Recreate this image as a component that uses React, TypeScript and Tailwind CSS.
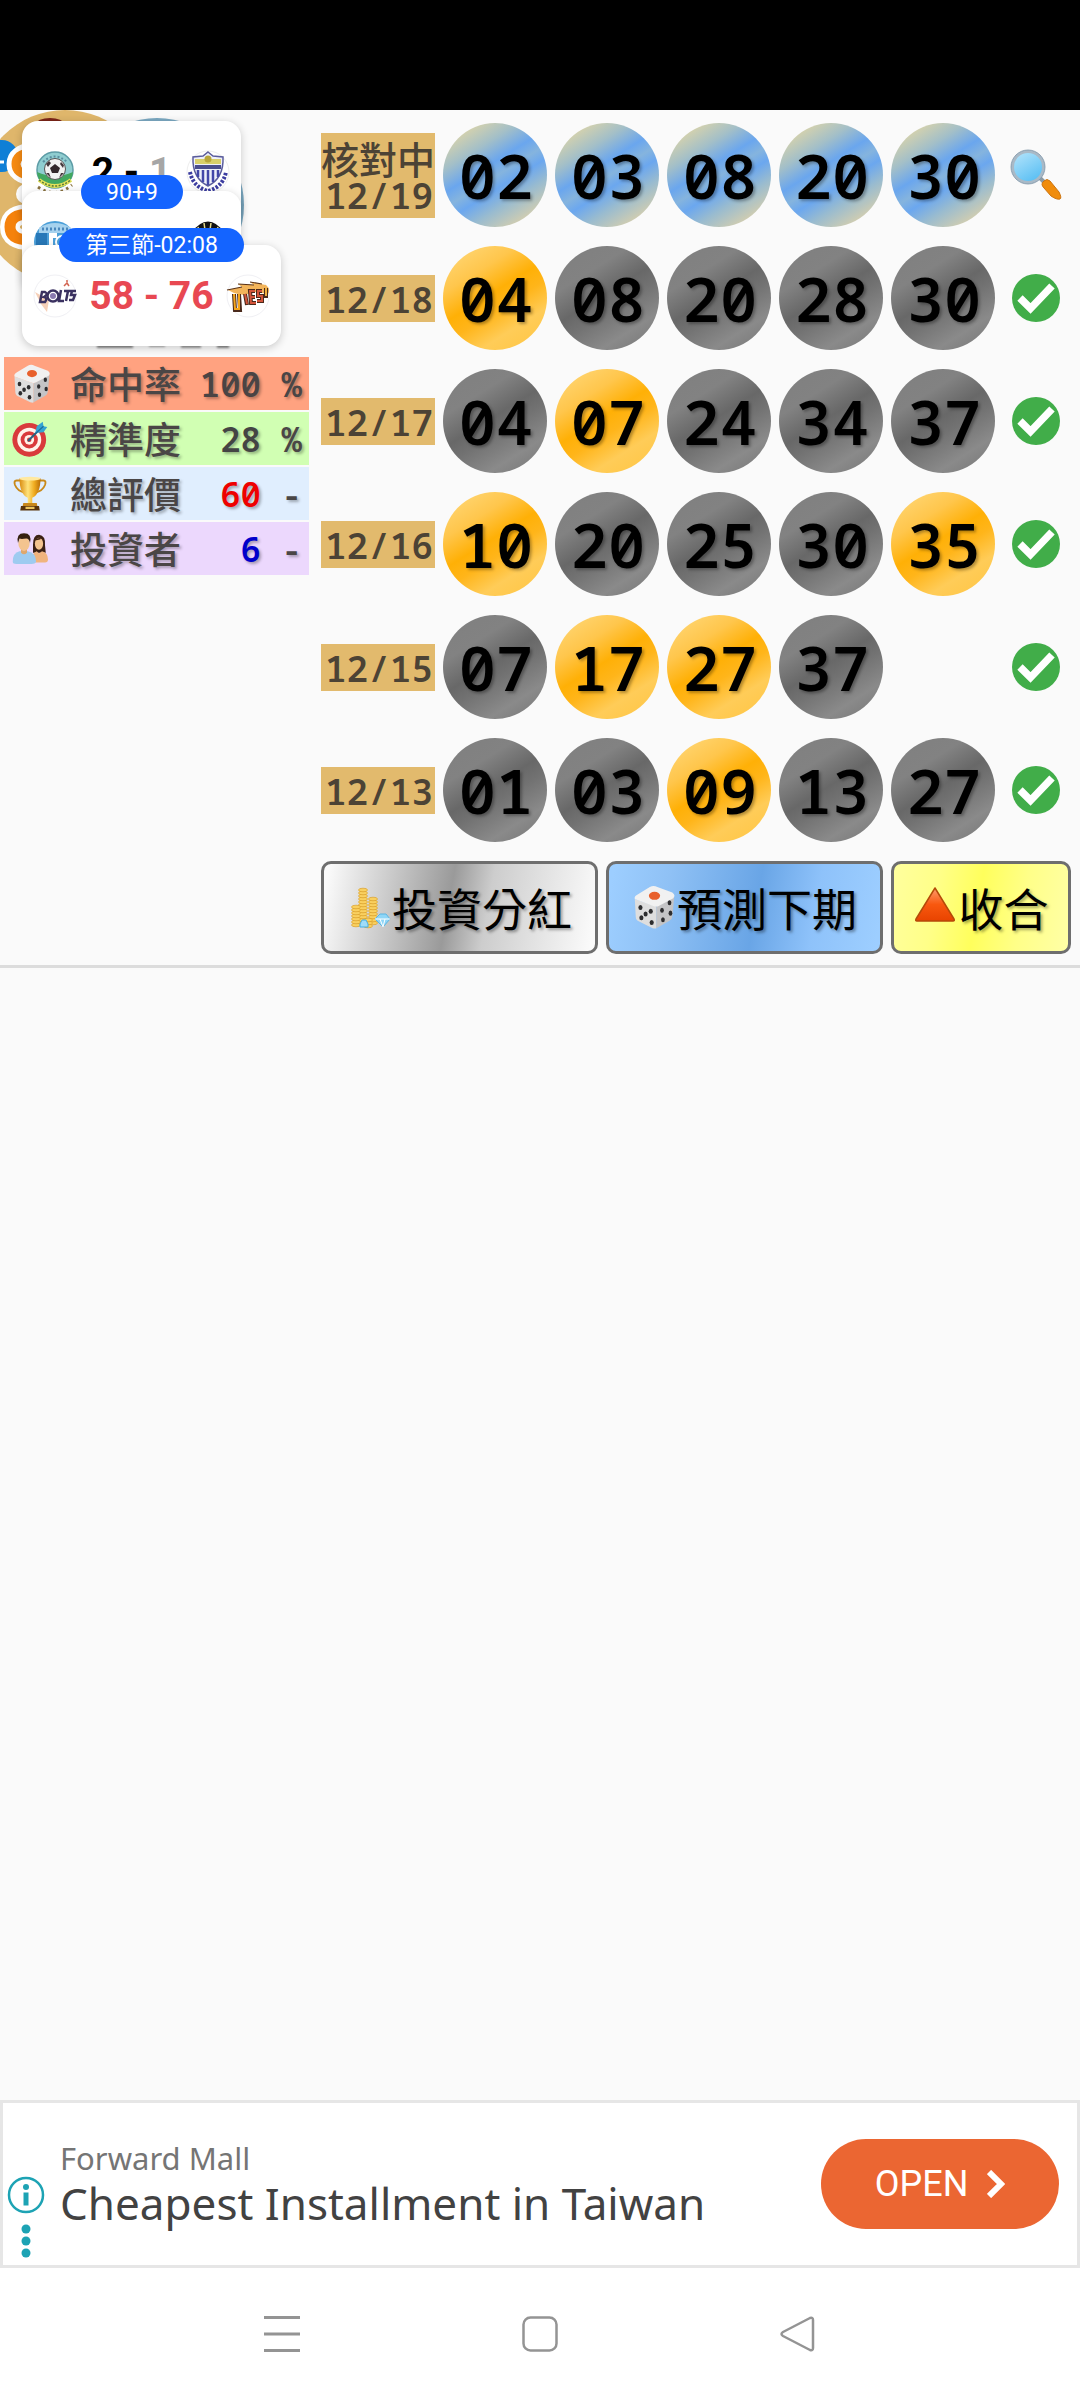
import React from 'react';
import type { ReactNode } from 'react';

const MONO = "font-['Noto_Sans_Mono','DejaVu_Sans_Mono','Noto_Sans_CJK_TC',monospace]";
const CJK = "font-['Noto_Sans_CJK_TC',sans-serif]";
const ROBOTO = "font-['Roboto','Noto_Sans_CJK_TC',sans-serif]";

function Dice({ className }: { className: string }) {
  return (
    <svg viewBox="0 0 48 48" className={className} aria-hidden="true">
      <path d="M3 15 L26 23 L26 46 Q25 47 22 46 L6 38 Q4 37 4 34 Z" fill="#dedede" />
      <path d="M26 23 L45 13 L43 33 Q43 36 40 38 L26 46 Z" fill="#c4c4c6" />
      <path d="M3 15 Q2 12 6 10 L19 2 Q23 0 27 2 L43 8 Q47 11 44 14 L29 22 Q26 24 22 22 Z" fill="#f1f1f1" />
      <ellipse cx="24" cy="11.500" rx="6" ry="4.300" fill="#e8602c" />
      <g fill="#2d2d2f">
        <ellipse cx="9" cy="24" rx="2.200" ry="2.700" />
        <ellipse cx="20" cy="28" rx="2.200" ry="2.700" />
        <ellipse cx="14.500" cy="31" rx="2.200" ry="2.700" />
        <ellipse cx="10" cy="35" rx="2.200" ry="2.700" />
        <ellipse cx="21" cy="40" rx="2.200" ry="2.700" />
        <ellipse cx="32" cy="27" rx="2" ry="2.700" />
        <ellipse cx="40" cy="19" rx="2" ry="2.700" />
        <ellipse cx="33" cy="37" rx="2" ry="2.700" />
        <ellipse cx="41" cy="30" rx="2" ry="2.700" />
      </g>
    </svg>
  );
}

function Target() {
  return (
    <svg viewBox="0 0 48 48" className="h-9 w-9" aria-hidden="true">
      <circle cx="23" cy="25" r="22.500" fill="#d93a3c" />
      <circle cx="23" cy="25" r="16" fill="#fff3ea" />
      <circle cx="23" cy="25" r="11.500" fill="#d93a3c" />
      <circle cx="23" cy="25" r="6.500" fill="#fff3ea" />
      <circle cx="23" cy="25" r="3" fill="#d93a3c" />
      <path d="M22 26 L36 12" stroke="#27617f" strokeWidth="2.500" strokeLinecap="round" />
      <path d="M31 16 L33 7 L41 1 L42 7 L47 8 L42 15 Z" fill="#35a3d3" />
      <path d="M32 16 L42 7" stroke="#1b6d99" strokeWidth="1.500" />
    </svg>
  );
}

function Trophy() {
  return (
    <svg viewBox="0 0 48 48" className="h-9 w-9" aria-hidden="true">
      <defs>
        <linearGradient id="cup" x1="0" x2="1">
          <stop offset="0" stopColor="#d98b10" />
          <stop offset="0.400" stopColor="#ffe27a" />
          <stop offset="0.700" stopColor="#f0ac20" />
          <stop offset="1" stopColor="#b96d06" />
        </linearGradient>
      </defs>
      <path d="M12 6 H6 Q2 6 4 12 Q7 20 17 22" fill="none" stroke="#c98a1a" strokeWidth="2.500" />
      <path d="M36 6 H42 Q46 6 44 12 Q41 20 31 22" fill="none" stroke="#c98a1a" strokeWidth="2.500" />
      <path d="M10 3 H38 Q38 24 27 29 V37 H21 V29 Q10 24 10 3 Z" fill="url(#cup)" />
      <ellipse cx="24" cy="3.500" rx="14" ry="2.500" fill="#ffe9a0" />
      <path d="M15 36 H33 L34 41 H14 Z" fill="#c8871a" />
      <path d="M12 40 H36 L37 46 H11 Z" fill="#593309" />
      <rect x="18" y="41" width="12" height="3" fill="#edc45c" />
    </svg>
  );
}

function Couple() {
  return (
    <svg viewBox="0 0 48 48" className="h-9 w-9" aria-hidden="true">
      <path d="M28 18 Q28 5 36 5 Q45 6 44 19 L45 29 H28 Z" fill="#3b2114" />
      <ellipse cx="36" cy="17" rx="5.500" ry="8" fill="#f3c48f" />
      <path d="M30 12 Q37 13 41 9 L43 14 Q38 6 30 12" fill="#3b2114" />
      <path d="M26 42 Q26 29 33 27 L36 30 L40 27 Q48 29 48 38 Q48 42 44 42 Z" fill="#f0b47e" />
      <path d="M1 41 Q1 29 10 27 H21 Q32 29 32 41 Q31 44 26 44 H6 Q1 44 1 41" fill="#9ecbf0" />
      <path d="M12 22 H20 V29 Q16 33 12 29 Z" fill="#dfa76d" />
      <ellipse cx="16" cy="17" rx="7.500" ry="9.500" fill="#f3c48f" />
      <path d="M8 16 Q5 3 16 3 Q27 3 24 16 Q23 10 19 10 Q12 11 10 10 Z" fill="#35200f" />
    </svg>
  );
}

function Magnifier() {
  return (
    <svg viewBox="0 0 52 52" className="h-[52px] w-[52px]" aria-hidden="true">
      <defs>
        <linearGradient id="lens" x1="0" y1="0" x2="0.600" y2="1">
          <stop offset="0" stopColor="#b9e6fb" />
          <stop offset="1" stopColor="#5cc0f4" />
        </linearGradient>
      </defs>
      <path d="M30 29 L36 35" stroke="#8c9aa3" strokeWidth="4" />
      <path d="M34 32 Q37 29 40 32 L49 43 Q52 49 50 50 Q47 51 41 47 L34 39 Q30 35 34 32 Z" fill="#f08c0c" stroke="#cc7410" />
      <circle cx="18" cy="18" r="15.500" fill="url(#lens)" stroke="#a9b9c6" strokeWidth="3" />
      <circle cx="18" cy="18" r="17" fill="none" stroke="#7f95a8" strokeWidth="0.800" />
    </svg>
  );
}

function Check() {
  return (
    <svg viewBox="0 0 48 48" className="h-12 w-12" role="img" aria-label="已核對">
      <circle cx="24" cy="24" r="24" fill="#41ad49" />
      <path d="M8 24 L18.500 34.500 L40 12" fill="none" stroke="#fff" strokeWidth="7.500" />
    </svg>
  );
}

function Coins() {
  return (
    <svg viewBox="0 0 45 45" className="h-[45px] w-[45px]" aria-hidden="true">
      <g stroke="#dba02a" strokeWidth="0.700" fill="#f9d060">
        {[38, 35, 32, 29, 26, 23, 20, 17, 14, 11, 8, 5].map((y) => (
          <ellipse key={'a' + y} cx="16" cy={y} rx="4.500" ry="1.800" />
        ))}
        {[38, 35, 32, 29, 26, 23, 20, 17, 14].map((y) => (
          <ellipse key={'b' + y} cx="26" cy={y} rx="4.500" ry="1.800" />
        ))}
        {[40, 37, 34, 31, 28, 25, 22].map((y) => (
          <ellipse key={'c' + y} cx="9" cy={y} rx="4.500" ry="1.800" />
        ))}
        {[41, 38, 35].map((y) => (
          <ellipse key={'d' + y} cx="21" cy={y} rx="4.500" ry="1.800" />
        ))}
      </g>
      <path d="M28 34 L33 29 H39 L43 34 L36 42 Z" fill="#8fd6f7" stroke="#5bb6e4" />
      <path d="M28 34 H43 M33 34 L36 42 L38 34" fill="none" stroke="#fff" />
      <path d="M13 39 L15 35 H19 L21 39 V42 H13 Z" fill="#9fdcf8" stroke="#45aee2" />
    </svg>
  );
}

function RedTriangle() {
  return (
    <svg viewBox="0 0 45 45" className="h-[45px] w-[45px]" aria-hidden="true">
      <defs>
        <linearGradient id="tri" x1="0" y1="0" x2="0" y2="1">
          <stop offset="0" stopColor="#ff9c6e" />
          <stop offset="0.500" stopColor="#f8580f" />
          <stop offset="1" stopColor="#e84300" />
        </linearGradient>
      </defs>
      <path d="M22 3 L41 34 Q42 36 40 36 H4 Q2 36 3 34 Z" fill="url(#tri)" stroke="#b54a08" strokeWidth="1.500" strokeLinejoin="round" />
    </svg>
  );
}

function GreenBadge() {
  return (
    <svg viewBox="0 0 44 44" className="h-11 w-11" aria-hidden="true">
      <circle cx="22" cy="20" r="18" fill="#8fcdd0" stroke="#5d9ca6" strokeWidth="1.500" />
      <path d="M4 22 Q22 30 40 22 Q38 38 22 38 Q6 38 4 22 Z" fill="#42a860" />
      <path d="M6 30 Q22 42 38 30" fill="none" stroke="#e4e25a" strokeWidth="4" />
      <path d="M6 30 Q22 42 38 30" fill="none" stroke="#5b7c3a" strokeWidth="1.500" strokeDasharray="2 1.500" />
      <path d="M10 12 Q22 1 34 12" fill="none" stroke="#5a8fa0" strokeWidth="2" strokeDasharray="2 2" />
      <circle cx="22" cy="19" r="10.500" fill="#f2f2f2" stroke="#555" />
      <path d="M22 14 L27 18 L25 23 H19 L17 18 Z" fill="#33282c" />
      <path d="M13 14 L16 11 L18 13 L15 17 Z M28 12 L31 15 L30 18 L27 14 Z M13 23 L16 23 L18 28 Z M31 23 L28 23 L26 28 Z" fill="#44383c" />
      <path d="M5 37 Q22 49 39 35" fill="none" stroke="#8a7340" strokeWidth="3" strokeDasharray="2.500 3.500" />
    </svg>
  );
}

function ShieldBadge() {
  return (
    <svg viewBox="0 0 44 44" className="h-11 w-11" aria-hidden="true">
      <circle cx="22" cy="22" r="21" fill="#fff" stroke="#eee" />
      <path d="M22 2 L27 6 L37 7 Q38 28 22 36 Q6 28 7 7 L17 6 Z" fill="#eef0fa" stroke="#5a5c9c" strokeWidth="1.500" />
      <path d="M9 9 H35 V14 H9 Z" fill="#d8cf6a" />
      <circle cx="22" cy="9" r="3.500" fill="#b8a63a" />
      <path d="M9 15 H35 V19 H9 Z" fill="#4a4d8d" />
      <path d="M12 20 V27 M17 20 V32 M22 20 V35 M27 20 V32 M32 20 V27" stroke="#4347a8" strokeWidth="2.500" />
      <path d="M4 22 Q7 37 22 41 Q37 37 40 22" fill="none" stroke="#3c3da0" strokeWidth="4" strokeDasharray="2.500 1.500" />
    </svg>
  );
}

function BlueBadge() {
  return (
    <svg viewBox="0 0 44 44" className="h-11 w-11" aria-hidden="true">
      <circle cx="22" cy="22" r="21" fill="#4b9fd8" />
      <path d="M6 8 Q22 -2 38 8 V13 H6 Z" fill="#a6d2ee" />
      <path d="M9 9 H35" stroke="#4b88bd" strokeWidth="3" strokeDasharray="2 2" />
      <path d="M3 13 H14 V26 H3 Z" fill="#2878b8" />
      <path d="M16 13 H24 V18 H20 V25 H16 Z" fill="#fff" />
      <circle cx="29" cy="22" r="6" fill="none" stroke="#fff" strokeWidth="2" />
    </svg>
  );
}

function BlackBadge() {
  return (
    <svg viewBox="0 0 44 44" className="h-11 w-11" aria-hidden="true">
      <path d="M5 13 Q22 -10 39 13 Z" fill="#111" />
      <path d="M12 7 L14 13 M18 3 L19 10 M25 3 L24 10 M32 7 L30 13" stroke="#e4d98c" strokeWidth="1.500" />
    </svg>
  );
}

function BoltsBadge() {
  return (
    <svg viewBox="0 0 44 44" className="h-11 w-11" aria-hidden="true">
      <circle cx="22" cy="22" r="21" fill="#fff" stroke="#f0f0f4" />
      <path d="M2 18 L16 26 L14 38 L8 30 Z" fill="#f6d0b8" />
      <g fill="none" stroke="#3a3160" strokeWidth="2.500">
        <path d="M9 18 L7 28 H12 Q15 24 11 23 Q16 20 12 18 Z" />
        <circle cx="20" cy="22" r="5.500" />
        <path d="M28 16 L26 27 H31 M31 17 H38 M35 17 L33 27 M43 17 H39 L38 21 H42 L40 26 H36" />
      </g>
      <circle cx="20" cy="22" r="3" fill="#8b7bb0" />
      <path d="M31 12 L34 9 L36 12 M33 7 L35 7" fill="none" stroke="#d26552" strokeWidth="1.500" />
    </svg>
  );
}

function FlameBadge() {
  return (
    <svg viewBox="0 0 44 44" className="h-11 w-11" aria-hidden="true">
      <circle cx="22" cy="22" r="21" fill="#fff" stroke="#f0f0f4" />
      <path d="M2 16 L16 13 L12 10 L28 11 L24 8 L40 11 Q45 15 42 20 L30 18 L18 21 L12 20 L8 19 Z" fill="#f2b45a" />
      <path d="M1 16 L16 13 M12 10 L28 11 M24 8 L36 10" stroke="#5a3216" strokeWidth="1.200" />
      <g fill="none" stroke="#4a2a1c" strokeWidth="4">
        <path d="M8 20 L9 36 H14 L13 20" />
        <path d="M19 20 L21 31 M29 17 H24 L25 29 H30 M24 23 H29 M36 17 H32 V22 H36 V27 H31 M40 14 L40 24" />
      </g>
      <g fill="none" strokeWidth="2">
        <path d="M8 20 L9 35 H13 L13 20" stroke="#f5a51c" />
        <path d="M19 20 L21 30 M29 17 H24 L25 29 H30 M24 23 H29 M36 17 H32 V22 H36 V27 H31" stroke="#d2543a" />
        <path d="M40 14 L40 22" stroke="#f0b040" />
      </g>
    </svg>
  );
}

function Medallions() {
  return (
    <svg viewBox="0 0 250 200" className="h-[200px] w-[250px]" aria-hidden="true">
      <circle cx="157" cy="95" r="87" fill="#7ba9c2" />
      <circle cx="65" cy="87" r="87" fill="#dfb66b" />
      <ellipse cx="50" cy="14" rx="14" ry="6" fill="#7b2418" />
      <circle cx="2" cy="46" r="16" fill="#0f7fd6" />
      <path d="M0 52 H4" stroke="#fff" strokeWidth="3" />
      <path d="M32 42 Q16 44 16 54 Q16 64 32 66" fill="none" stroke="#fff" strokeWidth="19" />
      <path d="M32 42 Q16 44 16 54 Q16 64 32 66" fill="none" stroke="#f58a12" strokeWidth="9" />
      <circle cx="26" cy="84" r="10" fill="#fff" />
      <path d="M30 104 Q10 104 10 117 Q10 130 30 130" fill="none" stroke="#fff" strokeWidth="20" />
      <path d="M30 104 Q10 104 10 117 Q10 130 30 130" fill="none" stroke="#f5820c" strokeWidth="11" />
    </svg>
  );
}

function ScoreCard({ left, right, children }: { left: ReactNode; right: ReactNode; children: ReactNode }) {
  return (
    <div className="flex h-[101px] items-center rounded-2xl bg-white px-[11px] shadow-[0_2px_8px_rgba(0,0,0,0.2)]">
      {left}
      <div className={`flex-1 text-center text-[39px] font-bold leading-[44px] ${ROBOTO}`}>{children}</div>
      {right}
    </div>
  );
}

function Pill({ children }: { children: ReactNode }) {
  return (
    <div className={`flex h-[34px] items-center justify-center rounded-full bg-[#1464ff] text-[23px] leading-none text-white ${ROBOTO}`}>
      {children}
    </div>
  );
}

const stats = [
  { icon: <Dice className="h-10 w-10" />, label: '命中率', value: '100', unit: '%', row: 'bg-[#ffa280]', tone: 'text-[#4a4444]' },
  { icon: <Target />, label: '精準度', value: '28', unit: '%', row: 'bg-[#d1ffb3]', tone: 'text-[#444444]' },
  { icon: <Trophy />, label: '總評價', value: '60', unit: '-', row: 'bg-[#e0eefe]', tone: 'text-[#ee0000]' },
  { icon: <Couple />, label: '投資者', value: '6', unit: '-', row: 'bg-[#ecd8fd]', tone: 'text-[#0000cc]' },
];

type Draw = { date: string; balls: string[]; hits: string[]; pending?: boolean };

const draws: Draw[] = [
  { date: '12/19', balls: ['02', '03', '08', '20', '30'], hits: [], pending: true },
  { date: '12/18', balls: ['04', '08', '20', '28', '30'], hits: ['04'] },
  { date: '12/17', balls: ['04', '07', '24', '34', '37'], hits: ['07'] },
  { date: '12/16', balls: ['10', '20', '25', '30', '35'], hits: ['10', '35'] },
  { date: '12/15', balls: ['07', '17', '27', '37', ''], hits: ['17', '27'] },
  { date: '12/13', balls: ['01', '03', '09', '13', '27'], hits: ['09'] },
];

const BLUE = 'bg-[linear-gradient(148deg,#d0d0b0_14%,#a3bfc8_28%,#6aa6ee_42%,#85b4de_51%,#6ba7ef_59%,#98bbd0_71%,#cdccb3_86%)]';
const GOLD = 'bg-[linear-gradient(148deg,#ffd571_8%,#ffc64c_28%,#ffb006_46%,#ffb51a_58%,#ffcc58_75%,#ffc748_92%)]';
const GREY = 'bg-[linear-gradient(148deg,#808080_8%,#828282_28%,#686868_47%,#727272_58%,#8a8a8a_78%,#7c7c7c_92%)]';

function Ball({ value, draw }: { value: string; draw: Draw }) {
  if (!value) return <span />;
  const fill = draw.pending ? BLUE : draw.hits.includes(value) ? GOLD : GREY;
  return (
    <span className={`flex aspect-square items-center justify-center rounded-full pl-[2px] text-[62px] font-semibold leading-none text-black [text-shadow:2px_2px_3px_rgba(0,0,0,0.3)] ${fill} ${MONO}`}>
      {value}
    </span>
  );
}

function DrawRow({ draw }: { draw: Draw }) {
  return (
    <li className="grid grid-cols-[114px_repeat(5,minmax(0,1fr))_68px] items-center gap-2">
      <span className={`flex flex-col items-center bg-[#e2ba6d] pb-1 pl-[2px] pt-[6px] text-[36px] font-semibold leading-[37px] text-[#4c4335] ${MONO}`}>
        {draw.pending && <span className={`-ml-[2px] text-[38px] font-medium leading-[38px] ${CJK}`}>核對中</span>}
        {draw.date}
      </span>
      {draw.balls.map((value, i) => (
        <Ball key={i} value={value} draw={draw} />
      ))}
      <span className="flex justify-center pr-[2px]">{draw.pending ? <Magnifier /> : <Check />}</span>
    </li>
  );
}

function ActionButton({ fill, icon, label }: { fill: string; icon: ReactNode; label: string }) {
  return (
    <button
      type="button"
      className={`flex h-[93px] items-center justify-center rounded-[10px] border-[3px] border-[#6e6e6e] text-[45px] leading-none text-black [text-shadow:2px_2px_3px_rgba(0,0,0,0.35)] ${fill} ${CJK}`}
    >
      {icon}
      <span>{label}</span>
    </button>
  );
}

export default function App() {
  return (
    <div className="flex min-h-screen flex-col bg-[#fafafa]">
      <header className="h-[110px] shrink-0 bg-black" />

      <main className="flex-1">
        <section className="relative flex border-b-[3px] border-[#dcdcdc]">
          <div className="w-[310px] shrink-0 overflow-hidden">
            <div className="relative h-[245px]">
              <div className="absolute left-0 top-0"><Medallions /></div>
              <div className="absolute left-[97px] top-[232px] flex gap-4 blur-[1px]">
                <span className="h-[6px] w-9 bg-[#888]" />
                <span className="h-[5px] w-4 bg-[#aaa]" />
                <span className="h-[6px] w-5 bg-[#999]" />
                <span className="h-[6px] w-3 bg-[#888]" />
              </div>
              <div className="absolute left-[22px] top-[11px] w-[219px]">
                <ScoreCard left={<GreenBadge />} right={<ShieldBadge />}>
                  2 - <span className="text-[#a6a6a6]">1</span>
                </ScoreCard>
              </div>
              <div className="absolute left-[22px] top-[81px] w-[219px]">
                <ScoreCard left={<BlueBadge />} right={<BlackBadge />}>{null}</ScoreCard>
              </div>
              <div className="absolute left-[81px] top-[65px] w-[102px]"><Pill>90+9</Pill></div>
              <div className="absolute left-[22px] top-[135px] w-[259px]">
                <ScoreCard left={<BoltsBadge />} right={<FlameBadge />}>
                  <span className="text-[#e84852]">58 - 76</span>
                </ScoreCard>
              </div>
              <div className="absolute left-[59px] top-[118px] w-[185px]"><Pill>第三節-02:08</Pill></div>
            </div>
            <table className="ml-1 w-[305px] border-separate border-spacing-x-0 border-spacing-y-[2px]">
              <tbody>
                {stats.map((s) => (
                  <tr key={s.label} className={`h-[53px] text-[#4a4646] [text-shadow:2px_2px_3px_rgba(0,0,0,0.3)] ${s.row}`}>
                    <td className="w-[66px] p-0 pl-2">{s.icon}</td>
                    <th scope="row" className={`p-0 text-left text-[37px] font-medium leading-none ${CJK}`}>{s.label}</th>
                    <td className={`p-0 text-right text-[34px] font-semibold leading-none ${s.tone} ${MONO}`}>{s.value}</td>
                    <td className={`w-12 p-0 pr-[7px] text-right text-[34px] font-semibold leading-none ${MONO}`}>{s.unit}</td>
                  </tr>
                ))}
              </tbody>
            </table>
          </div>

          <div className="flex-1 pb-[11px] pl-[11px] pr-[9px] pt-[13px]">
            <ul className="flex flex-col gap-[19px]">
              {draws.map((d) => (
                <DrawRow key={d.date} draw={d} />
              ))}
            </ul>
            <div className="mt-[19px] grid grid-cols-[277fr_277fr_180fr] gap-2">
              <ActionButton
                fill="bg-[linear-gradient(100deg,#fafafa_2%,#cfcfcf_22%,#9a9a9a_46%,#cdcdcd_60%,#fafafa_98%)]"
                icon={<Coins />}
                label="投資分紅"
              />
              <ActionButton
                fill="bg-[linear-gradient(100deg,#9dceff_2%,#8fc1f5_22%,#69a5e6_54%,#8ec2fa_75%,#9dceff_98%)]"
                icon={<Dice className="h-[45px] w-[45px]" />}
                label="預測下期"
              />
              <ActionButton
                fill="bg-[linear-gradient(100deg,#ffff9c_2%,#ffff88_25%,#ffff5c_48%,#ffff88_72%,#ffffa4_98%)]"
                icon={<RedTriangle />}
                label="收合"
              />
            </div>
          </div>
        </section>
      </main>

      <aside className="flex h-[168px] shrink-0 items-center border-[3px] border-[#e6e6e6] bg-white pr-[18px]">
        <div className="flex w-[57px] shrink-0 flex-col items-start gap-[10px] self-end pb-[7px] pl-1">
          <button type="button" aria-label="廣告資訊">
            <svg viewBox="0 0 38 38" className="h-[38px] w-[38px]" fill="#1da3b4">
              <circle cx="19" cy="19" r="17" fill="none" stroke="#1da3b4" strokeWidth="2.500" />
              <circle cx="19" cy="11" r="3" />
              <rect x="16.500" y="16.500" width="5" height="13" />
            </svg>
          </button>
          <button type="button" aria-label="更多選項">
            <svg viewBox="0 0 38 34" className="h-[34px] w-[38px]" fill="#1da3b4">
              <circle cx="19" cy="5" r="4.500" />
              <circle cx="19" cy="17" r="4.500" />
              <circle cx="19" cy="29" r="4.500" />
            </svg>
          </button>
        </div>
        <div className="flex-1 pb-1 font-['Noto_Sans',sans-serif]">
          <p className="text-[31px] leading-[42px] text-[#757575]">Forward Mall</p>
          <p className="text-[44px] leading-[48px] text-[#424242]">Cheapest Installment in Taiwan</p>
        </div>
        <button type="button" className={`flex h-[90px] w-[238px] items-center justify-center gap-[19px] rounded-full bg-[#eb6632] text-[36px] leading-none text-white ${ROBOTO}`}>
          OPEN
          <svg viewBox="0 0 18 28" className="h-7 w-[18px]" aria-hidden="true">
            <path d="M2 2 L14 14 L2 26" fill="none" stroke="#fff" strokeWidth="6" />
          </svg>
        </button>
      </aside>

      <nav className="flex h-[132px] shrink-0 items-center justify-center gap-[222px] bg-white">
        <button type="button" aria-label="選單">
          <svg viewBox="0 0 36 36" className="h-9 w-9" fill="none" stroke="#949494" strokeWidth="3">
            <path d="M0 1.500 H36 M0 18 H36 M0 34.500 H36" />
          </svg>
        </button>
        <button type="button" aria-label="主畫面">
          <svg viewBox="0 0 36 36" className="h-9 w-9" fill="none" stroke="#949494" strokeWidth="2.500">
            <rect x="1.500" y="1.500" width="33" height="33" rx="7" />
          </svg>
        </button>
        <button type="button" aria-label="返回">
          <svg viewBox="0 0 36 36" className="h-9 w-9" fill="none" stroke="#949494" strokeWidth="2.500" strokeLinejoin="round">
            <path d="M3 16 Q0 18 3 20 L30 34 Q33 35 33 32 V4 Q33 1 30 2 Z" />
          </svg>
        </button>
      </nav>
    </div>
  );
}
